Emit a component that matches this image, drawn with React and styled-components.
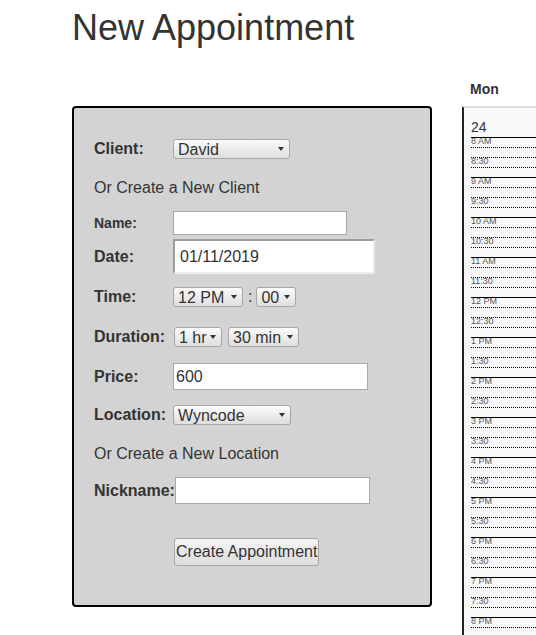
import React from 'react';
import styled, { createGlobalStyle } from 'styled-components';

const GlobalStyle = createGlobalStyle`
  html, body { margin: 0; padding: 0; background: #fff; overflow: hidden; }
  body { font-family: "Liberation Sans", Arial, sans-serif; color: #333; }
`;

const Page = styled.div`
  padding: 7px 0 0 72px;
`;

const Title = styled.h1`
  margin: 0;
  font-size: 36px;
  font-weight: normal;
  line-height: 41px;
  color: #333;
`;

const Main = styled.div`
  display: flex;
  align-items: flex-start;
  margin-top: 26px;
`;

const FormPanel = styled.form`
  flex-shrink: 0;
  width: 360px;
  height: 501px;
  box-sizing: border-box;
  margin-top: 32px;
  border: 2px solid #000;
  border-radius: 4px;
  background: #d3d3d3;
  padding: 31px 20px 0;
`;

const Row = styled.div`
  display: flex;
  align-items: center;
  height: ${p => p.$h}px;
  margin-top: ${p => p.$mt || 0}px;
`;

const Label = styled.label`
  min-width: 79px;
  font-weight: bold;
  font-size: ${p => (p.$small ? 14 : 16)}px;
  color: #333;
  white-space: nowrap;
`;

const Note = styled.p`
  margin: ${p => p.$mt}px 0 0;
  font-size: 16px;
  line-height: 18px;
  color: #333;
`;

const SelectWrap = styled.span`
  position: relative;
  display: inline-flex;
  margin-left: ${p => p.$ml || 0}px;
`;

const Select = styled.select`
  appearance: none;
  -webkit-appearance: none;
  width: ${p => p.$w}px;
  height: 20px;
  box-sizing: border-box;
  margin: 0;
  padding: 0 0 0 4px;
  border: 1px solid #a6a6a6;
  border-radius: 3px;
  background: linear-gradient(#fbfbfb, #dedede);
  font: 16px "Liberation Sans", Arial, sans-serif;
  color: #333;
  outline: none;
`;

const Arrow = styled.svg`
  position: absolute;
  right: 6px;
  top: 8px;
  width: 6px;
  height: 4px;
  pointer-events: none;
`;

const Colon = styled.span`
  margin: 0 4px 0 5px;
  font-size: 16px;
  color: #333;
`;

const TextInput = styled.input`
  box-sizing: border-box;
  width: ${p => p.$w}px;
  height: ${p => p.$h}px;
  margin: 0;
  padding: 0 0 0 ${p => (p.$inset ? 5 : 2)}px;
  border: ${p => (p.$inset ? 2 : 1)}px solid #a9a9a9;
  border-color: ${p => (p.$inset ? '#9c9c9c #ececec #ececec #9c9c9c' : '#a9a9a9')};
  background: #fff;
  font: 16px "Liberation Sans", Arial, sans-serif;
  color: #333;
  outline: none;
`;

const SubmitButton = styled.button`
  display: block;
  margin: 34px 0 0 80px;
  height: 28px;
  padding: 0 1px;
  border: 1px solid #a6a6a6;
  border-radius: 3px;
  background: linear-gradient(#f4f4f4, #dcdcdc);
  font: 16px "Liberation Sans", Arial, sans-serif;
  color: #333;
`;

const CalendarColumn = styled.div`
  flex-shrink: 0;
  margin-left: 30px;
  width: 300px;
`;

const DayHeader = styled.div`
  padding-left: 8px;
  font-weight: bold;
  font-size: 14px;
  line-height: 30px;
  color: #333;
`;

const DayBox = styled.div`
  margin-top: 2px;
  border-top: 2px solid #ddd;
  border-left: 2px solid #222;
  background: #f9f9f9;
  padding: 0 0 10px 7px;
`;

const DateNum = styled.div`
  font-size: 14px;
  line-height: 16px;
  padding: 11px 0 2px;
  color: #333;
`;

const Quarter = styled.div`
  height: 9px;
  border-top: 1px ${p => (p.$solid ? 'solid' : 'dotted')} #000;
  font-size: 9px;
  line-height: 7px;
  color: #555;
  white-space: nowrap;
`;

const Dropdown = ({ w, ml, value, options }) => (
  <SelectWrap $ml={ml}>
    <Select $w={w} defaultValue={value}>
      {options.map(o => (
        <option key={o} value={o}>{o}</option>
      ))}
    </Select>
    <Arrow viewBox="0 0 6 4">
      <path d="M0 0 L6 0 L3 4 Z" fill="#333" />
    </Arrow>
  </SelectWrap>
);

const slots = [];
for (let h = 8; h <= 20; h++) {
  const hr = h > 12 ? h - 12 : h;
  const ampm = h >= 12 ? 'PM' : 'AM';
  slots.push({ label: `${hr} ${ampm}`, hour: true });
  if (h < 20) slots.push({ label: `${hr}:30`, hour: false });
}

export default function App() {
  return (
    <>
      <GlobalStyle />
      <Page>
        <Title>New Appointment</Title>
        <Main>
          <FormPanel onSubmit={e => e.preventDefault()}>
            <Row $h={20}>
              <Label>Client:</Label>
              <Dropdown w={117} value="David" options={['David', 'Maria', 'John']} />
            </Row>
            <Note $mt={20}>Or Create a New Client</Note>
            <Row $h={24} $mt={14}>
              <Label $small>Name:</Label>
              <TextInput $w={174} $h={24} />
            </Row>
            <Row $h={35} $mt={4}>
              <Label>Date:</Label>
              <TextInput $w={202} $h={35} $inset readOnly value="01/11/2019" />
            </Row>
            <Row $h={20} $mt={13}>
              <Label>Time:</Label>
              <Dropdown w={70} value="12 PM" options={['11 AM', '12 PM', '1 PM']} />
              <Colon>:</Colon>
              <Dropdown w={40} value="00" options={['00', '15', '30', '45']} />
            </Row>
            <Row $h={20} $mt={20}>
              <Label>Duration:</Label>
              <Dropdown w={48} ml={1} value="1 hr" options={['0 hr', '1 hr', '2 hr']} />
              <Dropdown w={71} ml={6} value="30 min" options={['00 min', '15 min', '30 min', '45 min']} />
            </Row>
            <Row $h={27} $mt={16}>
              <Label>Price:</Label>
              <TextInput $w={195} $h={27} readOnly value="600" />
            </Row>
            <Row $h={20} $mt={15}>
              <Label>Location:</Label>
              <Dropdown w={118} value="Wyncode" options={['Wyncode', 'Home', 'Office']} />
            </Row>
            <Note $mt={20}>Or Create a New Location</Note>
            <Row $h={27} $mt={14}>
              <Label>Nickname:</Label>
              <TextInput $w={195} $h={27} />
            </Row>
            <SubmitButton type="submit">Create Appointment</SubmitButton>
          </FormPanel>
          <CalendarColumn>
            <DayHeader>Mon</DayHeader>
            <DayBox>
              <DateNum>24</DateNum>
              {slots.map(s => (
                <React.Fragment key={s.label}>
                  <Quarter $solid={s.hour}>{s.label}</Quarter>
                  <Quarter />
                </React.Fragment>
              ))}
            </DayBox>
          </CalendarColumn>
        </Main>
      </Page>
    </>
  );
}
